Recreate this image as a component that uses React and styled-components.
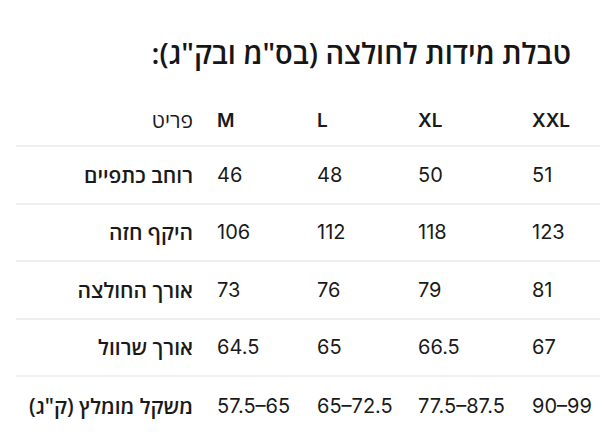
import styled, { createGlobalStyle } from "styled-components";

const GlobalStyle = createGlobalStyle`
  html, body {
    margin: 0;
    padding: 0;
    background: #ffffff;
  }
  body {
    font-family: Inter, "Open Sans", "DejaVu Sans", sans-serif;
    color: #1a1a1a;
    -webkit-font-smoothing: antialiased;
  }
`;

const Page = styled.div`
  width: 600px;
  height: 439px;
  overflow: hidden;
  padding-top: 36px;
  box-sizing: border-box;
`;

const Title = styled.h2`
  margin: 0 29px 25px 0;
  direction: rtl;
  text-align: right;
  font-family: "Open Sans", "DejaVu Sans", sans-serif;
  font-size: 29px;
  font-weight: 600;
  line-height: 34px;
  color: #161616;
`;

const TableWrap = styled.div`
  padding-left: 16px;
  overflow: hidden;
`;

const Row = styled.div`
  display: grid;
  grid-template-columns: 189px 100px 101px 114px 90px;
  align-items: center;
  height: ${(p) => (p.$header ? "52px" : "57.5px")};
  box-sizing: border-box;
  border-bottom: ${(p) => (p.$last ? "none" : "2px solid #efefef")};
  width: 594px;
`;

const LabelCell = styled.div`
  direction: rtl;
  text-align: right;
  padding-right: 12px;
  font-family: "Open Sans", "DejaVu Sans", sans-serif;
  font-size: 21px;
  font-weight: ${(p) => (p.$header ? 400 : 600)};
  color: #1a1a1a;
  white-space: nowrap;
`;

const ValueCell = styled.div`
  text-align: left;
  padding-left: 12px;
  font-size: ${(p) => (p.$header ? "19px" : "20px")};
  font-weight: ${(p) => (p.$header ? 600 : 400)};
  white-space: nowrap;
`;

const sizes = ["M", "L", "XL", "XXL"];

const rows = [
  { label: "רוחב כתפיים", values: ["46", "48", "50", "51"] },
  { label: "היקף חזה", values: ["106", "112", "118", "123"] },
  { label: "אורך החולצה", values: ["73", "76", "79", "81"] },
  { label: "אורך שרוול", values: ["64.5", "65", "66.5", "67"] },
  {
    label: 'משקל מומלץ (ק"ג)',
    values: ["57.5–65", "65–72.5", "77.5–87.5", "90–99"],
  },
];

const App = () => {
  return (
    <>
      <GlobalStyle />
      <Page>
        <Title>טבלת מידות לחולצה (בס"מ ובק"ג):</Title>
        <TableWrap>
          <Row $header>
            <LabelCell $header>פריט</LabelCell>
            {sizes.map((s) => (
              <ValueCell $header key={s}>
                {s}
              </ValueCell>
            ))}
          </Row>
          {rows.map((row, i) => (
            <Row key={row.label} $last={i === rows.length - 1}>
              <LabelCell>{row.label}</LabelCell>
              {row.values.map((v, j) => (
                <ValueCell key={j}>{v}</ValueCell>
              ))}
            </Row>
          ))}
        </TableWrap>
      </Page>
    </>
  );
};

export default App;
